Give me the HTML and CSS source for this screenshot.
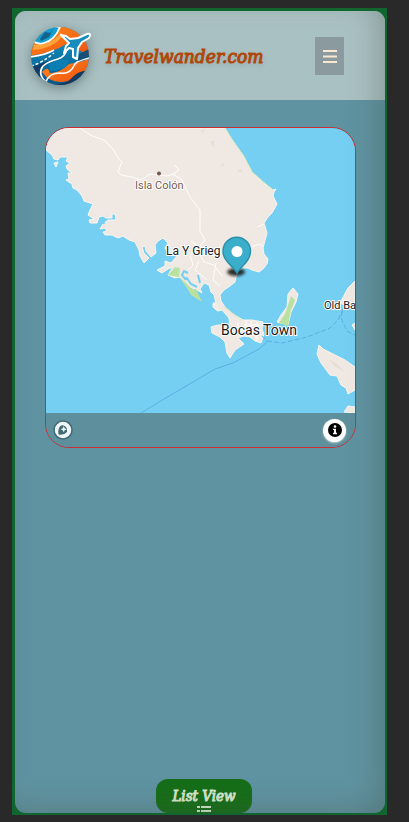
FILE: index.html
```html
<!DOCTYPE html>
<html lang="en">
<head>
<meta charset="utf-8">
<meta name="viewport" content="width=device-width, initial-scale=1">
<title>Travelwander.com</title>
<link rel="stylesheet" href="styles.css">
</head>
<body>
<div class="frame">
  <div class="screen">
    <header class="header">
      <svg class="logo" viewBox="0 0 64 62" aria-hidden="true">
        <defs>
          <clipPath id="globe"><circle cx="30" cy="31" r="29"/></clipPath>
          <linearGradient id="orange" x1="0" y1="0" x2="1" y2="1"><stop offset="0" stop-color="#ff8a1c"/><stop offset="1" stop-color="#ee4f10"/></linearGradient>
          <linearGradient id="blue" x1="0" y1="0" x2="0" y2="1"><stop offset="0" stop-color="#139ccc"/><stop offset="1" stop-color="#075487"/></linearGradient>
        </defs>
        <g clip-path="url(#globe)">
          <path fill="url(#blue)" d="M0 0h64v62H0z"/>
          <path fill="url(#orange)" d="M0 33V14L30 0H64V32L46 24L36 19Q25 27 0 31z"/>
          <path fill="#ffa33a" d="M3 25Q22 24 32 12L31 7Q23 19 4 20z"/>
          <path fill="#159fce" stroke="#fff" stroke-width="1.800" d="M2 15Q7 20 14 18Q25 15 30 2L15 0z"/>
          <path fill="#13628e" d="M10 14l5-7 5 1 3-4-4 8-8 4z"/>
          <path fill="none" stroke="#fff" stroke-width="1.500" d="M0 32Q16 30 24 25"/>
          <path fill="none" stroke="#fff" stroke-width="1.400" stroke-dasharray="3 2" d="M1 41Q12 38 24 28"/>
          <path fill="#123c65" d="M0 43Q12 38 27 33Q10 40 10 48L15 60H0z"/>
          <path fill="url(#orange)" d="M12 47Q18 40 20 48Q30 48 39 39L49 37L60 34V45Q45 47 39 56Q20 60 12 47z"/>
          <path fill="#0b7fb3" d="M19 39Q29 33 39 35L37 41Q29 46 20 46z"/>
          <path fill="none" stroke="#fff" stroke-width="1.600" d="M16 57Q7 49 13 41Q19 36 28 34Q35 32 37 24"/>
          <path fill="none" stroke="#fff" stroke-width="1.600" d="M16 57Q19 48 30 48Q40 50 45 39Q48 35 60 33"/>
          <path fill="#16395e" d="M23 60Q35 59 41 54Q47 46 60 45V62H23z"/>
          <path fill="#174f79" d="M49 29l10-5v8l-11 4z"/>
        </g>
        <path fill="#178bbb" stroke="#fff" stroke-width="2" stroke-linejoin="round" d="M31 10L36 11L40 14L48 13L57 9Q62 8 59 13L52 17L48 23L47 34L43 32V24L39 23L34 28L36 21L39 18Z"/>
      </svg>
      <h1 class="brand">Travelwander.com</h1>
      <button class="menu" type="button" aria-label="Menu">
        <svg viewBox="0 0 14 14" aria-hidden="true"><path d="M0 2h14M0 7.500h14M0 13h14"/></svg>
      </button>
    </header>
    <main class="content">
      <section class="card" aria-label="Map">
        <svg class="map" viewBox="46 128 309 285" role="img" aria-label="Map of Bocas Town">
          <defs><filter id="soft" x="-50%" y="-100%" width="200%" height="300%"><feGaussianBlur stdDeviation="1.5"/></filter></defs>
          <path class="land" d="M46 128H225L231 138L237 147L243 155L252 172L262 182L273 190L276 189L274 192L273 196L277 204L272 213L268 217L264 223L267 233L263 248L264 254L268 259L267 264L263 269L259 272L252 270L248 268L242 268L236 277L235 282L230 286L224 290L220 295L221 301L225 307L233 314L243 320L252 320L263 322L262 329L264 334L261 343L255 341L250 337L244 336L238 338L244 344L235 350L230 358L227 353L225 342L220 337L212 333L211 327L218 325L230 326L229 318L222 310L218 311L214 308L213 303L216 303L214 295L211 292L209 285L204 283L200 289L202 293L197 290L190 287L185 283L180 277L175 278L168 275L173 267L168 269L162 273L157 270L165 266L165 261L171 263L177 256L170 255L165 248L168 243L163 238L158 241L155 245L156 253L151 257L146 251L145 246L142 247L144 253L149 258L144 263L140 256L139 250L135 242L129 240L123 236L118 238L112 235L105 235L103 232L107 231L105 228L100 229L103 224L108 220L116 220L115 214L112 214L112 218L106 218L103 216L99 217L97 223L90 223L89 220L94 219L88 215L90 210L93 204L84 201L82 196L77 190L73 188L72 184L66 180L69 179L68 173L72 173L67 169L66 166L70 163L66 161L68 157L60 157L58 160L54 159L52 155L46 150Z"/>
          <path class="land" d="M293 288L298 294L296 302L291 312L288 325L277 322L281 315L287 307L288 294ZM355 281L348 288L340 303L355 310ZM319 345L323 349L331 353L345 360L355 367V390L348 394L346 388L341 385L337 376L330 375L321 363L317 354ZM352 325L355 323V330ZM344 412L348 406L355 407V413ZM54 163L58 162L56 167ZM213 304L217 306L218 311L213 307Z"/>
          <path class="park" d="M291 296L295 300L291 310L288 326L279 323L285 314ZM168 275L175 267L180 268L179 277ZM179 277L184 281L192 289L196 289L202 302L191 295L187 288Z"/>
          <path class="sand" d="M225 128L231 138L243 155L252 172L273 190M223 306L241 320"/>
          <path class="creek" d="M186 280L182 275L184 271L188 273M186 277L191 284L197 287M198 275L200 283M102 217L104 224"/>
          <path class="road" d="M80 128L92 136L104 140L113 149L118 158L122 162L118 172L121 175L132 177L141 180L150 174L167 176L173 174L179 170L175 165M173 174L182 180L190 197L200 210L200 231L205 240L197 250L204 262L214 265L222 276M257 227L264 224M252 247L259 244L263 246M191 241L200 247L190 255L193 265L188 270M199 261L195 270L207 280M216 263L213 280L220 286M246 320V329L256 330V339M238 322V329L248 330M244 325H263M251 321V337M257 322V341"/>
          <path class="texture" d="M201 131l4-3-2 6zM210 141h4v7zM221 165l4-3-2 5zM237 172h6l-3-3zM330 360l7 4 8 8-11-6z"/>
          <path class="ferry" d="M141 413L164 399L193 382L215 369L233 363L259 349L268 341"/>
          <path class="ferry dashed" d="M262 336L268 341L282 343L307 337L330 328L338 320L343 309L341 318L347 331L355 335"/>
          <circle class="village" cx="159" cy="173.500" r="2"/>
          <text class="minor" x="135" y="189">Isla Colón</text>
          <text class="place" x="166" y="255">La Y Grieg</text>
          <text class="place old" x="324" y="309">Old Ba</text>
          <text class="town" x="221" y="335">Bocas Town</text>
          <ellipse cx="236" cy="272" rx="9" ry="4" fill="#111" opacity=".85" filter="url(#soft)"/>
          <path fill="#3baecc" stroke="#2b91ab" stroke-width="1.500" d="M237 273C233 266 223 261 223 251A13.700 13.700 0 0 1 250.500 251C250.500 261 241 266 237 273Z"/>
          <circle cx="237" cy="251.500" r="5.500" fill="#fff"/>
        </svg>
        <div class="mapbar">
          <a class="mapmark" href="#" aria-label="Map provider">
            <svg viewBox="0 0 20 20" aria-hidden="true"><circle cx="10" cy="10" r="9" fill="#f1f6f8" stroke="#416b76" stroke-width="1.500"/><path fill="#416b76" d="M5.500 14.500Q4.500 8 8 5.500A5 5 0 0 1 14 12Q11 15.500 5.500 14.500Z"/><path fill="#f1f6f8" d="M10.700 6.200l1 2 2 1-2 1-1 2-1-2-2-1 2-1z"/></svg>
          </a>
          <button class="info" type="button" aria-label="Map information">
            <svg viewBox="0 0 14 14" aria-hidden="true"><circle cx="7" cy="7" r="7"/><circle cx="7" cy="3.500" r="1.300" fill="#fff"/><path fill="#fff" d="M5 5.700h3v4h1v1.500H5V9.700h1V7H5z"/></svg>
          </button>
        </div>
      </section>
    </main>
    <button class="list" type="button">
      <span>List View</span>
      <svg viewBox="0 0 14 10" aria-hidden="true"><path d="M0 1h3v2H0zM4 1h10v2H4zM0 5h3v2H0zM4 5h10v2H4z"/></svg>
    </button>
  </div>
</div>
</body>
</html>
```
FILE: styles.css
```css
* { box-sizing: border-box; }

body {
  display: flex;
  min-height: 100vh;
  margin: 0;
  padding: 8px 22px 7px 12px;
  background: #292929;
  font-family: "DejaVu Serif Condensed", "DejaVu Serif", serif;
}

button { padding: 0; border: 0; font: inherit; }

.frame {
  display: flex;
  flex: 1;
  min-width: 0;
  padding: 3px 2px 2px 3px;
  background: #11652f;
}

.screen {
  position: relative;
  display: flex;
  flex: 1;
  flex-direction: column;
  min-width: 0;
  overflow: hidden;
  border-radius: 11px;
  background: #5f93a1;
}

.screen::after {
  position: absolute;
  inset: 0;
  border-radius: inherit;
  box-shadow: inset -12px -8px 32px -8px rgba(70, 80, 70, 0.4);
  content: "";
  pointer-events: none;
}

.header {
  display: flex;
  align-items: center;
  height: 89px;
  padding: 0 41px 0 15px;
  background: #aac1c3;
}

.logo {
  flex: none;
  width: 64px;
  height: 62px;
  filter: drop-shadow(0 3px 6px rgba(45, 65, 65, 0.5));
}

.brand {
  margin: 0 auto 0 10px;
  color: #b04708;
  font-size: 19px;
  font-style: italic;
  font-weight: 400;
  line-height: 24px;
  text-shadow: 0 2px 4px rgba(60, 80, 80, 0.3);
  -webkit-text-stroke: 1px #b04708;
}

.menu {
  display: grid;
  flex: none;
  place-items: center;
  width: 29px;
  height: 38px;
  background: #8b9a9e;
}

.menu svg { width: 14px; height: 14px; fill: none; stroke: #fae8d2; stroke-width: 2; }

.content { flex: 1; padding: 27px 29px 0 30px; }

.card {
  overflow: hidden;
  border: 1px solid #c92f35;
  border-radius: 24px;
}

.map { display: block; width: 100%; background: #75cff2; font-family: Roboto, sans-serif; }
.land { fill: #f0e9e3; stroke: #f8f5ed; stroke-width: 1; }
.park { fill: #b9e2a2; }
.sand, .road, .creek, .ferry { fill: none; }
.sand { stroke: #dce8b8; stroke-width: 1; }
.road { stroke: #fffdf9; stroke-width: 1; }
.creek { stroke: #75cff2; stroke-width: 2; }
.texture { fill: #e7ded5; }
.ferry { stroke: #5eaee1; stroke-width: 1; }
.dashed { stroke-dasharray: 5 2; }
.village { fill: #76594a; }
.map text { paint-order: stroke; stroke: #fff; stroke-width: 2px; stroke-linejoin: round; }
.minor { fill: #735c51; font-size: 11px; }
.place { fill: #202126; font-size: 12px; }
.old { font-size: 11px; }
.town { fill: #17191d; font-size: 14px; }

.mapbar {
  display: flex;
  align-items: center;
  justify-content: space-between;
  height: 34px;
  padding: 0 9px 0 7px;
  background: #5e8f9c;
}

.mapmark, .mapmark svg { display: block; width: 20px; height: 20px; }

.info {
  display: grid;
  place-items: center;
  width: 23px;
  height: 23px;
  border-radius: 50%;
  background: #fff;
  box-shadow: 0 1px 2px #b9cfd4;
}

.info svg { width: 14px; height: 14px; }

.list {
  display: flex;
  flex-direction: column;
  align-items: center;
  align-self: center;
  width: 96px;
  height: 34px;
  margin-left: 8px;
  padding-top: 8px;
  overflow: hidden;
  border-radius: 12px;
  background: #166e18;
  color: #d5e8ce;
  font-size: 15px;
  font-style: italic;
  line-height: 18px;
  -webkit-text-stroke: 1px #d5e8ce;
}

.list svg { flex: none; width: 14px; height: 10px; fill: #d5e8ce; }
```
